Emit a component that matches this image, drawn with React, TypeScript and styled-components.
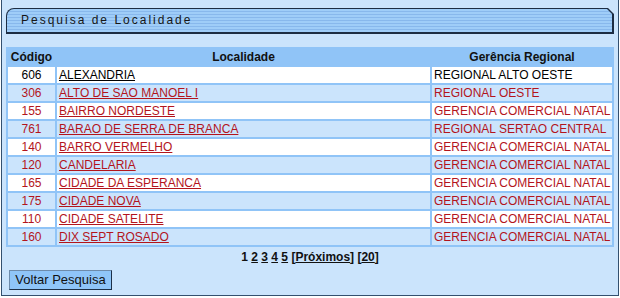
import React from "react";
import styled, { createGlobalStyle } from "styled-components";

const Global = createGlobalStyle`
  html, body { margin: 0; padding: 0; background: #ffffff; }
  body { font-family: "Liberation Sans", Arial, sans-serif; }
`;

const Frame = styled.div`
  box-sizing: border-box;
  margin: 0 1px;
  width: 618px;
  height: 296px;
  background: #cbe4fc;
  border: 1px solid #33506f;
  border-top: none;
  padding: 8px 4px 0 4px;
  display: flex;
  flex-direction: column;
`;

const TitleOuter = styled.div`
  height: 26px;
  box-sizing: border-box;
  background: #1d2d43;
  border-top-left-radius: 8px;
  padding: 1px 2px 2px 1px;
  clip-path: polygon(0 0, calc(100% - 6px) 0, 100% 6px, 100% 100%, 0 100%);
`;

const TitleInner = styled.div`
  height: 100%;
  border-top-left-radius: 7px;
  clip-path: polygon(0 0, calc(100% - 5px) 0, 100% 5px, 100% 100%, 0 100%);
  background: repeating-linear-gradient(
    to bottom,
    #9fcdf8 0px,
    #9fcdf8 2px,
    #88b8ec 2px,
    #88b8ec 3px
  );
  font-size: 12px;
  letter-spacing: 2px;
  line-height: 23px;
  color: #161616;
  padding-left: 14px;
`;

const Table = styled.table`
  margin-top: 13px;
  width: 608px;
  table-layout: fixed;
  border-collapse: separate;
  border-spacing: 2px;
  background: #90c4f7;
  font-size: 12px;
`;

const HeadCell = styled.th`
  padding: 0;
  height: 16px;
  line-height: 16px;
  font-weight: bold;
  text-align: center;
  color: #111;
  background: #90c4f7;
  white-space: nowrap;
`;

const Cell = styled.td<{ $alt: boolean; $first: boolean; $align?: string }>`
  padding: 0 0 0 2px;
  height: 16px;
  line-height: 16px;
  background: ${(p) => (p.$alt ? "#cbe4fc" : "#ffffff")};
  color: ${(p) => (p.$first ? "#000000" : "#b3141c")};
  text-align: ${(p) => p.$align || "left"};
  white-space: nowrap;
  overflow: hidden;
`;

const CodeCell = styled(Cell)`
  padding: 0;
`;

const Link = styled.a`
  color: inherit;
  text-decoration: underline;
`;

const Pager = styled.div`
  margin-top: 2px;
  height: 16px;
  line-height: 16px;
  text-align: center;
  font-size: 12px;
  font-weight: bold;
  color: #111;
`;

const PageLink = styled.a<{ $current?: boolean }>`
  color: #111;
  text-decoration: ${(p) => (p.$current ? "none" : "underline")};
`;

const Button = styled.button`
  margin-top: 5px;
  margin-left: 3px;
  align-self: flex-start;
  width: 103px;
  height: 20px;
  padding: 0;
  box-sizing: border-box;
  background: #8fc5f8;
  border: 1px solid;
  border-color: #6d8bab #1d3048 #1d3048 #6d8bab;
  font-family: "Liberation Sans", Arial, sans-serif;
  font-size: 13px;
  color: #111;
  line-height: 18px;
`;

const rows = [
  ["606", "ALEXANDRIA", "REGIONAL ALTO OESTE"],
  ["306", "ALTO DE SAO MANOEL I", "REGIONAL OESTE"],
  ["155", "BAIRRO NORDESTE", "GERENCIA COMERCIAL NATAL"],
  ["761", "BARAO DE SERRA DE BRANCA", "REGIONAL SERTAO CENTRAL"],
  ["140", "BARRO VERMELHO", "GERENCIA COMERCIAL NATAL"],
  ["120", "CANDELARIA", "GERENCIA COMERCIAL NATAL"],
  ["165", "CIDADE DA ESPERANCA", "GERENCIA COMERCIAL NATAL"],
  ["175", "CIDADE NOVA", "GERENCIA COMERCIAL NATAL"],
  ["110", "CIDADE SATELITE", "GERENCIA COMERCIAL NATAL"],
  ["160", "DIX SEPT ROSADO", "GERENCIA COMERCIAL NATAL"],
];

export default function App() {
  return (
    <>
      <Global />
      <Frame>
        <TitleOuter>
          <TitleInner>Pesquisa de Localidade</TitleInner>
        </TitleOuter>
        <Table>
          <colgroup>
            <col style={{ width: 47 }} />
            <col style={{ width: 373 }} />
            <col style={{ width: 180 }} />
          </colgroup>
          <thead>
            <tr>
              <HeadCell>Código</HeadCell>
              <HeadCell>Localidade</HeadCell>
              <HeadCell>Gerência Regional</HeadCell>
            </tr>
          </thead>
          <tbody>
            {rows.map((r, i) => (
              <tr key={r[0]}>
                <CodeCell $alt={i % 2 === 1} $first={i === 0} $align="center">
                  {r[0]}
                </CodeCell>
                <Cell $alt={i % 2 === 1} $first={i === 0}>
                  <Link href="#">{r[1]}</Link>
                </Cell>
                <Cell $alt={i % 2 === 1} $first={i === 0}>
                  {r[2]}
                </Cell>
              </tr>
            ))}
          </tbody>
        </Table>
        <Pager>
          <PageLink $current>1</PageLink> <PageLink href="#">2</PageLink>{" "}
          <PageLink href="#">3</PageLink> <PageLink href="#">4</PageLink>{" "}
          <PageLink href="#">5</PageLink> [<PageLink href="#">Próximos</PageLink>] [
          <PageLink href="#">20</PageLink>]
        </Pager>
        <Button>Voltar Pesquisa</Button>
      </Frame>
    </>
  );
}
